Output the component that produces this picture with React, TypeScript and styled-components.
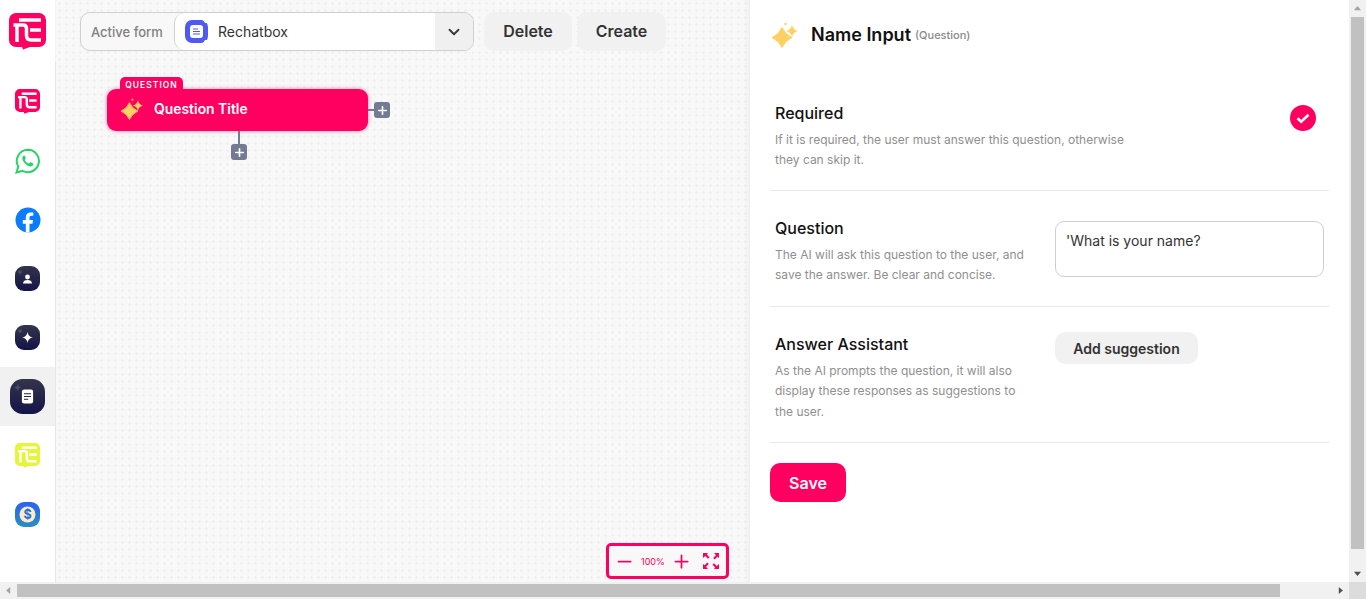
import React from "react";
import styled, { createGlobalStyle } from "styled-components";
import { ChevronDown, Minus, Plus } from "lucide-react";

const PINK = "#ff0061";

const GlobalStyle = createGlobalStyle`
  html, body {
    margin: 0;
    height: 100%;
    overflow: hidden;
  }
  body {
    font-family: "Inter", "Liberation Sans", sans-serif;
    color: #111;
  }
  * {
    box-sizing: border-box;
  }
`;

const starPath = (x: number, y: number, r: number, bend = 0.12) => {
  const c = bend * r;
  return `M${x} ${y - r}Q${x + c} ${y - c} ${x + r} ${y}Q${x + c} ${y + c} ${x} ${y + r}Q${x - c} ${y + c} ${x - r} ${y}Q${x - c} ${y - c} ${x} ${y - r}z`;
};

const Sparkles = ({ size }: { size: number }) => (
  <svg width={size} height={size} viewBox="0 0 26 26">
    <path d={starPath(10, 15.5, 10, 0.3)} fill="#fdd161" strokeLinejoin="round" stroke="#fdd161" />
    <path d={starPath(20, 9, 6, 0.2)} fill="#fdd161" />
    <circle cx="13.5" cy="2" r="1.2" fill="#fdd161" />
  </svg>
);

const ReLogo = ({ size, color }: { size: number; color: string }) => (
  <svg width={size} height={size} viewBox="0 0 37 37">
    <path
      d="M7 0h23a7 7 0 0 1 7 7v20a7 7 0 0 1-7 7h-9l-7 2.500-1-2.500H7a7 7 0 0 1-7-7V7a7 7 0 0 1 7-7z"
      fill={color}
    />
    <path
      d="M10 7h22M8 29V12M4.500 12H14c2.500 0 3.500 1.500 3.500 3.500v7c0 3 1.500 4.500 4.500 4.500h10M21 17h11"
      fill="none"
      stroke="#fff"
      strokeWidth="3.500"
    />
  </svg>
);

const AppTile = ({
  top,
  bottom,
  size,
  children,
}: {
  top: string;
  bottom: string;
  size: number;
  children: React.ReactNode;
}) => {
  const id = `tile-${top.slice(1)}-${size}`;
  return (
    <svg width={size} height={size} viewBox="0 0 25 25">
      <defs>
        <linearGradient id={id} x1="0" y1="0" x2="0" y2="1">
          <stop offset="0" stopColor={top} />
          <stop offset="1" stopColor={bottom} />
        </linearGradient>
      </defs>
      <rect width="25" height="25" rx="9" fill={`url(#${id})`} />
      {children}
    </svg>
  );
};

const WhatsApp = () => (
  <svg width="26" height="26" viewBox="0 0 26 26">
    <path
      d="M13 1.800a11.200 11.200 0 0 0-9.700 16.800L1.500 24.500l6-1.600A11.200 11.200 0 1 0 13 1.800z"
      fill="#fff"
      stroke="#25d366"
      strokeWidth="2"
    />
    <path
      d="M9.400 7.500c-.4 0-1 .2-1.400.8-.6.8-.9 2-.4 3.500.8 2.300 2.800 4.700 5.200 5.900 1.700.8 3.100.9 4.200.3.800-.5 1.300-1.300 1.300-2.100 0-.3-.1-.4-.4-.6l-2.200-1.100c-.3-.1-.5-.1-.7.2l-.8 1c-.2.200-.4.200-.7.100-1.600-.7-2.800-1.800-3.600-3.300-.1-.3-.1-.5.100-.7l.6-.8c.2-.2.200-.4.100-.7l-.9-2c-.1-.4-.3-.5-.6-.5z"
      fill="#25d366"
    />
  </svg>
);

const Facebook = () => (
  <svg width="26" height="26" viewBox="0 0 26 26">
    <circle cx="13" cy="13" r="12.500" fill="#0a7cff" />
    <path
      d="M10.800 25.400v-8.700H7.800v-3.700h3V10.300c0-3.200 1.900-4.900 4.700-4.900 1.400 0 2.500.2 2.800.2v3.200h-1.900c-1.500 0-1.900.8-1.900 1.900V13h3.600l-.6 3.700h-3v8.700z"
      fill="#fff"
    />
  </svg>
);

const railItems: { key: string; active?: boolean; icon: React.ReactNode }[] = [
  { key: "chat", icon: <ReLogo size={25} color={PINK} /> },
  { key: "whatsapp", icon: <WhatsApp /> },
  { key: "facebook", icon: <Facebook /> },
  {
    key: "users",
    icon: (
      <AppTile top="#34344a" bottom="#14144a" size={25}>
        <path d={starPath(5, 6, 3)} fill="#4b4b63" />
        <circle cx="12.500" cy="11" r="2.400" fill="#fff" />
        <path d="M8 17.500c0-2.600 2-3.600 4.500-3.600s4.500 1 4.500 3.600z" fill="#fff" />
      </AppTile>
    ),
  },
  {
    key: "assistant",
    icon: (
      <AppTile top="#34344a" bottom="#14144a" size={25}>
        <path d={starPath(5, 6, 3)} fill="#4b4b63" />
        <path d={starPath(12.5, 12.5, 5.5)} fill="#fff" />
      </AppTile>
    ),
  },
  {
    key: "forms",
    active: true,
    icon: (
      <AppTile top="#34344a" bottom="#14144a" size={35}>
        <path d={starPath(5.5, 6, 2.8)} fill="#4b4b63" />
        <rect x="8.500" y="7.500" width="8" height="10" rx="1.500" fill="#fff" />
        <path d="M10 10.500h5M10 12.500h5M10 14.500h3" stroke="#24244a" strokeWidth="0.8" />
      </AppTile>
    ),
  },
  { key: "chat-lime", icon: <ReLogo size={25} color="#e6f53c" /> },
  {
    key: "billing",
    icon: (
      <AppTile top="#2a62f0" bottom="#2a8fc0" size={25}>
        <circle cx="12.500" cy="12.500" r="8" fill="#fdebc8" />
        <text
          x="12.500"
          y="17"
          textAnchor="middle"
          fontSize="12.500"
          fontWeight="700"
          fill="#2470d8"
          fontFamily="Inter, sans-serif"
        >
          $
        </text>
      </AppTile>
    ),
  },
];

export default function App() {
  return (
    <>
      <GlobalStyle />
      <Screen>
        <Workspace>
          <Rail>
            <LogoSlot>
              <ReLogo size={37} color={PINK} />
            </LogoSlot>
            <RailList>
              {railItems.map((item) => (
                <RailItem key={item.key} $active={item.active}>
                  {item.icon}
                </RailItem>
              ))}
            </RailList>
          </Rail>

          <Canvas>
            <Toolbar>
              <FormSelect>
                <SelectLabel>Active form</SelectLabel>
                <SelectValue>
                  <svg width="23" height="23" viewBox="0 0 23 23">
                    <rect width="23" height="23" rx="7" fill="#4f5bf0" />
                    <path d="M18 0h5v3h-3zM18 23h5v-3h-3z" fill="#fff" />
                    <rect x="5" y="5" width="13" height="13" rx="3" fill="#fff" />
                    <path d="M8 9h5M8 11.500h7M8 14h7" stroke="#4f5bf0" strokeWidth="1.200" />
                  </svg>
                  Rechatbox
                </SelectValue>
                <SelectArrow>
                  <ChevronDown size={18} strokeWidth={2.5} />
                </SelectArrow>
              </FormSelect>
              <ToolButton $width={88}>Delete</ToolButton>
              <ToolButton $width={89}>Create</ToolButton>
            </Toolbar>

            <NodeCard>
              <NodeTag>QUESTION</NodeTag>
              <Sparkles size={22} />
              <NodeTitle>Question Title</NodeTitle>
              <SideLink>
                <AddNode>
                  <Plus size={13} strokeWidth={3} />
                </AddNode>
              </SideLink>
              <BottomLink>
                <AddNode>
                  <Plus size={13} strokeWidth={3} />
                </AddNode>
              </BottomLink>
            </NodeCard>

            <ZoomBox>
              <Minus size={21} strokeWidth={2} />
              <ZoomValue>100%</ZoomValue>
              <Plus size={21} strokeWidth={2} />
              <ExpandIcon width="16" height="16" viewBox="0 0 16 16" fill={PINK}>
                <path d="M0 0h5L3.800 1.600l2.700 2.700-1.500 1.500-2.700-2.700L0 5zM16 0v5l-1.600-1.200-2.700 2.700-1.500-1.500 2.700-2.700L11 0zM0 16v-5l1.600 1.200 2.700-2.700 1.500 1.500-2.700 2.700L5 16zM16 16h-5l1.200-1.600-2.700-2.700 1.500-1.500 2.700 2.700L16 11z" />
              </ExpandIcon>
            </ZoomBox>
          </Canvas>

          <Panel>
            <PanelHeader>
              <Sparkles size={26} />
              <PanelTitle>Name Input</PanelTitle>
              <PanelKind>(Question)</PanelKind>
            </PanelHeader>

            <RequiredRow>
              <div>
                <FieldTitle>Required</FieldTitle>
                <FieldHint $width={360}>
                  If it is required, the user must answer this question, otherwise they can skip it.
                </FieldHint>
              </div>
              <CheckMark>
                <svg width="14" height="14" viewBox="0 0 14 14">
                  <path d="M1.500 7.300l3.700 3.400L12.500 3.800" fill="none" stroke="#fff" strokeWidth="2.600" />
                </svg>
              </CheckMark>
            </RequiredRow>

            <QuestionRow>
              <div>
                <FieldTitle>Question</FieldTitle>
                <FieldHint $width={260}>
                  The AI will ask this question to the user, and save the answer. Be clear and concise.
                </FieldHint>
              </div>
              <QuestionBox>'What is your name?</QuestionBox>
            </QuestionRow>

            <AssistantRow>
              <div>
                <FieldTitle>Answer Assistant</FieldTitle>
                <FieldHint $width={250}>
                  As the AI prompts the question, it will also display these responses as suggestions to the user.
                </FieldHint>
              </div>
              <SuggestionButton>Add suggestion</SuggestionButton>
            </AssistantRow>

            <SaveButton>Save</SaveButton>
          </Panel>

          <VerticalBar>
            <Arrow $dir="up" $dim />
            <VerticalThumb />
            <Arrow $dir="down" />
          </VerticalBar>
        </Workspace>

        <HorizontalBar>
          <Arrow $dir="left" $dim />
          <HorizontalThumb />
          <EndArrow $dir="right" />
          <BarCorner />
        </HorizontalBar>
      </Screen>
    </>
  );
}

const Screen = styled.div`
  display: flex;
  flex-direction: column;
  width: 1366px;
  height: 599px;
  overflow: hidden;
  background-color: #fff;
`;

const Workspace = styled.div`
  display: flex;
  flex: 1;
  min-height: 0;
`;

const Rail = styled.nav`
  display: flex;
  flex-direction: column;
  width: 56px;
  flex-shrink: 0;
  background-color: #fff;
`;

const LogoSlot = styled.div`
  display: flex;
  align-items: center;
  justify-content: center;
  height: 62px;
  padding-right: 1px;
  border-right: 1px solid #f3f3f3;
`;

const RailList = styled.div`
  display: flex;
  flex: 1;
  flex-direction: column;
  padding-top: 10px;
  border-right: 1px solid #e6e6e6;
`;

const RailItem = styled.div<{ $active?: boolean }>`
  display: flex;
  align-items: center;
  justify-content: center;
  height: 59px;
  background-color: ${(props) => (props.$active ? "#f1f1f1" : "transparent")};
`;

const Canvas = styled.main`
  position: relative;
  flex: 1;
  min-width: 0;
  background-color: #f8f8f8;
  background-image: radial-gradient(#eeeeee 1px, transparent 1.2px);
  background-size: 7px 7px;
  box-shadow: inset -8px 0 8px -8px rgba(0, 0, 0, 0.08);
`;

const Toolbar = styled.div`
  position: absolute;
  top: 12px;
  left: 24px;
  display: flex;
  gap: 5px;
  height: 39px;
`;

const FormSelect = styled.div`
  display: flex;
  width: 394px;
  margin-right: 5px;
  border: 1px solid #cfcfcf;
  border-radius: 10px;
  overflow: hidden;
  background-color: #f8f8f8;
`;

const SelectLabel = styled.div`
  display: flex;
  align-items: center;
  width: 93px;
  padding-left: 10px;
  font-size: 13px;
  font-weight: 500;
  color: #808080;
`;

const SelectValue = styled.div`
  display: flex;
  flex: 1;
  align-items: center;
  gap: 10px;
  padding-left: 10px;
  border-left: 1px solid #cfcfcf;
  border-radius: 10px 0 0 10px;
  background-color: #fff;
  font-size: 14px;
  color: #333;
`;

const SelectArrow = styled.div`
  display: flex;
  align-items: center;
  justify-content: center;
  width: 38px;
  background-color: #f0f0f0;
  color: #3a3a3a;
`;

const ToolButton = styled.button<{ $width: number }>`
  width: ${(props) => props.$width}px;
  padding-bottom: 2px;
  border: none;
  border-radius: 10px;
  background-color: #f1f1f1;
  font-family: inherit;
  font-size: 16px;
  font-weight: 600;
  color: #333;
`;

const NodeCard = styled.div`
  position: absolute;
  top: 89px;
  left: 51px;
  display: flex;
  align-items: center;
  width: 261px;
  height: 42px;
  padding: 0 0 2px 14px;
  gap: 11px;
  border-radius: 9px;
  background-color: ${PINK};
  box-shadow: 0 0 4px rgba(255, 0, 97, 0.45);
`;

const NodeTag = styled.span`
  position: absolute;
  top: -12px;
  left: 13px;
  display: flex;
  align-items: center;
  justify-content: center;
  width: 63px;
  height: 13px;
  padding-top: 2px;
  border-radius: 5px 5px 0 0;
  background-color: ${PINK};
  font-size: 8.5px;
  font-weight: 600;
  letter-spacing: 1px;
  color: #fff;
`;

const NodeTitle = styled.span`
  font-size: 13.9px;
  font-weight: 600;
  color: #fff;
`;

const SideLink = styled.div`
  position: absolute;
  top: 13px;
  left: 261px;
  display: flex;
  align-items: center;
  padding-left: 6px;

  &::before {
    content: "";
    position: absolute;
    left: 0;
    width: 6px;
    height: 2px;
    background-color: #747a91;
  }
`;

const BottomLink = styled.div`
  position: absolute;
  top: 42px;
  left: 124px;
  padding-top: 13px;

  &::before {
    content: "";
    position: absolute;
    top: 0;
    left: 7px;
    width: 2px;
    height: 13px;
    background-color: #747a91;
  }
`;

const AddNode = styled.span`
  display: flex;
  align-items: center;
  justify-content: center;
  width: 16px;
  height: 16px;
  border-radius: 3px;
  background-color: #747a91;
  color: #fff;
`;

const ZoomBox = styled.div`
  position: absolute;
  right: 21px;
  bottom: 3px;
  display: flex;
  align-items: center;
  gap: 6px;
  width: 123px;
  height: 36px;
  padding-left: 5px;
  border: 3px solid ${PINK};
  border-radius: 5px;
  background-color: #f8f8f8;
  color: ${PINK};
`;

const ZoomValue = styled.span`
  width: 24px;
  font-size: 9px;
  white-space: nowrap;
  color: ${PINK};
`;

const ExpandIcon = styled.svg`
  margin-left: 5px;
`;

const Panel = styled.aside`
  flex: 1;
  min-width: 0;
  max-width: 599px;
  padding: 0 20px;
  background-color: #fff;
`;

const PanelHeader = styled.header`
  display: flex;
  align-items: center;
  height: 70px;
  padding: 0 0 1px 2px;
`;

const PanelTitle = styled.h1`
  margin: 0 0 0 13px;
  font-size: 18px;
  font-weight: 600;
  color: #111;
`;

const PanelKind = styled.span`
  margin-left: 4px;
  font-size: 11px;
  font-weight: 500;
  color: #8a8a8a;
`;

const Row = styled.section`
  display: flex;
  justify-content: space-between;
  padding: 0 5px;
  border-bottom: 1px solid #e8e8e8;
`;

const RequiredRow = styled(Row)`
  height: 121px;
  padding-top: 33px;
  padding-right: 13px;
`;

const QuestionRow = styled(Row)`
  height: 116px;
  padding-top: 27px;
`;

const AssistantRow = styled(Row)`
  height: 136px;
  padding-top: 27px;
`;

const FieldTitle = styled.div`
  font-size: 16px;
  font-weight: 500;
  line-height: 20px;
  color: #111;
`;

const FieldHint = styled.p<{ $width: number }>`
  width: ${(props) => props.$width}px;
  margin: 7px 0 0;
  font-size: 12px;
  line-height: 20.4px;
  color: #8f8f8f;
`;

const CheckMark = styled.span`
  display: flex;
  align-items: center;
  justify-content: center;
  width: 26px;
  height: 26px;
  margin-top: 2px;
  border-radius: 50%;
  background-color: ${PINK};
`;

const QuestionBox = styled.div`
  width: 269px;
  height: 56px;
  margin-top: 3px;
  padding: 10px;
  border: 1px solid #cfcfcf;
  border-radius: 9px;
  font-size: 14px;
  line-height: 18px;
  color: #333;
`;

const SuggestionButton = styled.button`
  align-self: flex-start;
  width: 143px;
  height: 32px;
  margin-right: 126px;
  margin-top: -2px;
  border: none;
  border-radius: 10px;
  background-color: #f1f1f1;
  font-family: inherit;
  font-size: 14px;
  font-weight: 600;
  color: #333;
`;

const SaveButton = styled.button`
  display: block;
  width: 76px;
  height: 39px;
  margin-top: 20px;
  border: none;
  border-radius: 10px;
  background-color: ${PINK};
  font-family: inherit;
  font-size: 16px;
  font-weight: 600;
  color: #fff;
`;

const VerticalBar = styled.div`
  display: flex;
  flex-direction: column;
  width: 17px;
  flex-shrink: 0;
  background-color: #f1f1f1;
`;

const VerticalThumb = styled.div`
  flex: 1;
  margin: 0 2px 16px;
  background-color: #c1c1c1;
`;

const HorizontalBar = styled.div`
  display: flex;
  height: 17px;
  flex-shrink: 0;
  background-color: #f1f1f1;
`;

const HorizontalThumb = styled.div`
  width: 1263px;
  margin: 2px 0;
  background-color: #c1c1c1;
`;

const BarCorner = styled.div`
  width: 17px;
  background-color: #dcdcdc;
`;

const arrowTriangles = {
  up: "polygon(50% 36%, 71% 60%, 29% 60%)",
  down: "polygon(29% 40%, 71% 40%, 50% 64%)",
  left: "polygon(36% 50%, 60% 29%, 60% 71%)",
  right: "polygon(40% 29%, 64% 50%, 40% 71%)",
};

const Arrow = styled.span<{ $dir: keyof typeof arrowTriangles; $dim?: boolean }>`
  display: block;
  width: 17px;
  height: 17px;
  flex-shrink: 0;
  background-color: ${(props) => (props.$dim ? "#a3a3a3" : "#505050")};
  clip-path: ${(props) => arrowTriangles[props.$dir]};
`;

const EndArrow = styled(Arrow)`
  margin-left: auto;
`;
